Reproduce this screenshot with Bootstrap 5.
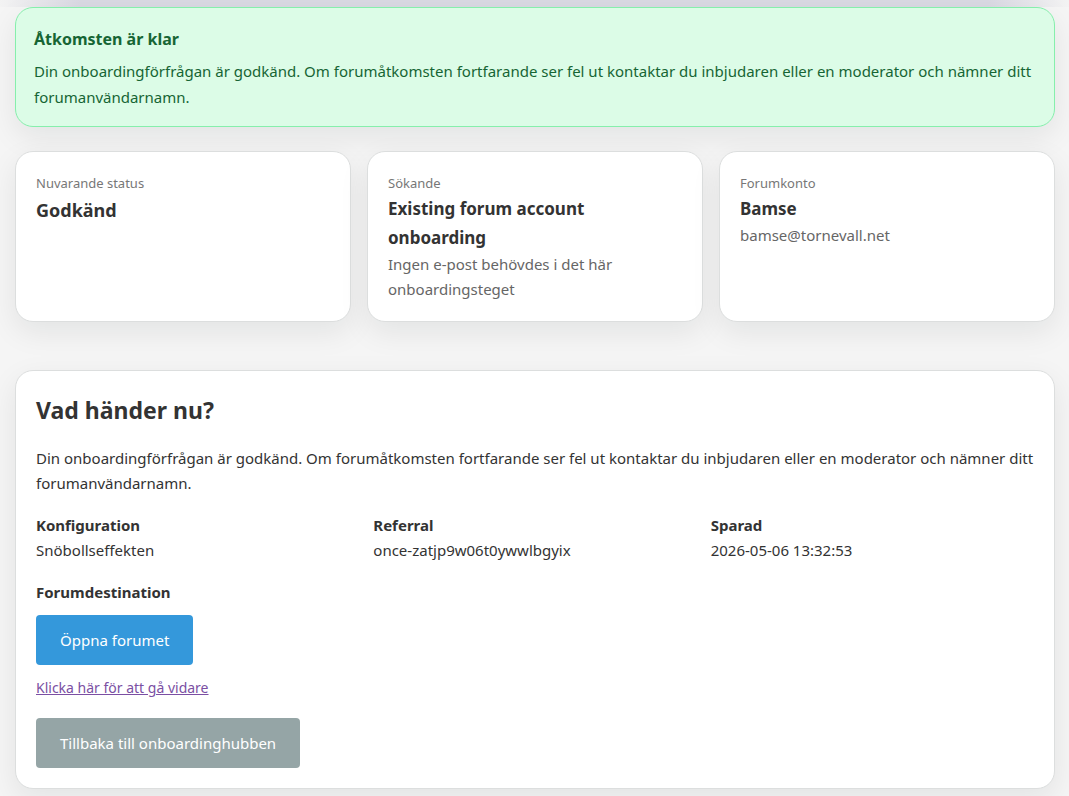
<!DOCTYPE html>
<html lang="sv">
<head>
<meta charset="utf-8">
<meta name="viewport" content="width=device-width, initial-scale=1">
<title>Onboarding</title>
<link href="https://cdn.jsdelivr.net/npm/bootstrap@5.3.0/dist/css/bootstrap.min.css" rel="stylesheet">
<style>
body { font-family: "Noto Sans", "Segoe UI", sans-serif; font-size: 15px; line-height: 25px; color: #333; background: #f5f5f5; }
.top-shade { height: 7px; background: linear-gradient(90deg, #f3f3f3, #dad9e3 80px, #dad9e3 calc(100% - 80px), #f3f3f3); }
.page-wrap { padding: 0 14px 7px 15px; }
.panel { border: 1px solid #dcdede; border-radius: 18px; padding: 20px; background: #fff; box-shadow: 0 10px 30px rgba(15, 23, 23, .08); }
.notice { background: #dcfce7; border-color: #86efac; color: #166534; padding: 18px 18px 16px; line-height: 26px; }
.notice-title { font-size: 16px; line-height: 26px; font-weight: 700; margin-bottom: 6px; }
.stats { display: grid; grid-template-columns: repeat(3, minmax(0, 1fr)); gap: 16px; }
.stats .panel { padding: 21px 20px 19px; }
.stat-label { font-size: 13px; line-height: 21px; color: #777; }
.stat-value { font-size: 17px; line-height: 29px; font-weight: 700; }
.stat-main { font-size: 18px; line-height: 32px; font-weight: 700; }
.stat-note { color: #666; }
.panel h2 { font-size: 23px; line-height: 38px; font-weight: 700; margin-bottom: 17px; }
.facts { display: grid; grid-template-columns: repeat(3, minmax(0, 1fr)); gap: 14px; margin: 17px 0; }
.action { color: #fff; border: 0; border-radius: 4px; font-size: 15px; line-height: 24px; padding: 13px 24px; }
.action:hover { color: #fff; }
.action-blue, .action-blue:hover { background: #3498db; }
.action-grey, .action-grey:hover { background: #95a5a6; }
.destination { row-gap: 10px; }
.forward { color: #7b4fa3; font-size: 14px; }
@media (max-width: 700px) { .stats, .facts { grid-template-columns: 1fr; } }
</style>
</head>
<body>
<div class="top-shade"></div>
<main class="page-wrap">
  <section class="panel notice mb-4" role="status">
    <div class="notice-title">Åtkomsten är klar</div>
    <div>Din onboardingförfrågan är godkänd. Om forumåtkomsten fortfarande ser fel ut kontaktar du inbjudaren eller en moderator och nämner ditt forumanvändarnamn.</div>
  </section>
  <section class="stats mb-5">
    <div class="panel">
      <div class="stat-label">Nuvarande status</div>
      <div class="stat-main">Godkänd</div>
    </div>
    <div class="panel">
      <div class="stat-label">Sökande</div>
      <div class="stat-value">Existing forum account onboarding</div>
      <div class="stat-note">Ingen e-post behövdes i det här onboardingsteget</div>
    </div>
    <div class="panel">
      <div class="stat-label">Forumkonto</div>
      <div class="stat-value">Bamse</div>
      <div class="stat-note">bamse@tornevall.net</div>
    </div>
  </section>
  <section class="panel">
    <h2>Vad händer nu?</h2>
    <p class="mb-0">Din onboardingförfrågan är godkänd. Om forumåtkomsten fortfarande ser fel ut kontaktar du inbjudaren eller en moderator och nämner ditt forumanvändarnamn.</p>
    <div class="facts">
      <div><strong>Konfiguration</strong><br>Snöbollseffekten</div>
      <div><strong>Referral</strong><br>once-zatjp9w06t0ywwlbgyix</div>
      <div><strong>Sparad</strong><br>2026-05-06 13:32:53</div>
    </div>
    <div class="destination d-flex flex-column align-items-start">
      <strong>Forumdestination</strong>
      <button type="button" class="btn action action-blue">Öppna forumet</button>
      <a href="#" class="forward mb-2">Klicka här för att gå vidare</a>
      <button type="button" class="btn action action-grey">Tillbaka till onboardinghubben</button>
    </div>
  </section>
</main>
<script src="https://cdn.jsdelivr.net/npm/bootstrap@5.3.0/dist/js/bootstrap.bundle.min.js"></script>
</body>
</html>
